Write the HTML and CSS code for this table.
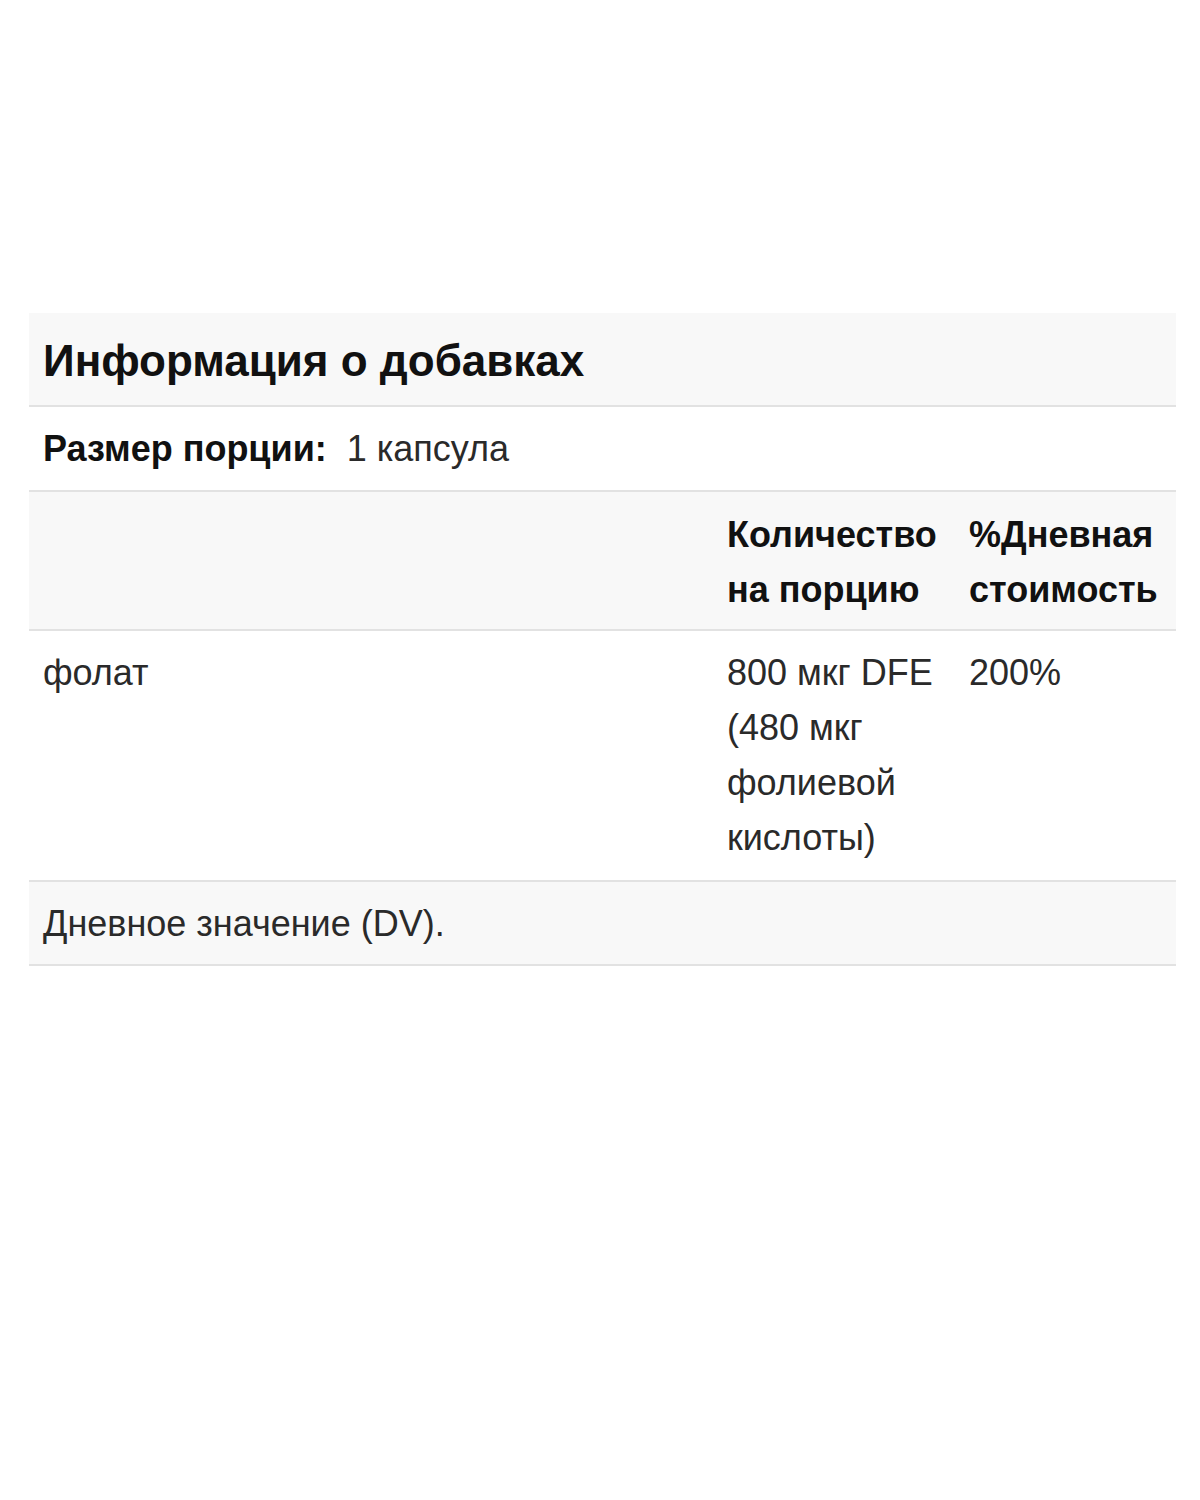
FILE: index.html
```html
<!DOCTYPE html>
<html lang="ru">
<head>
<meta charset="utf-8">
<link rel="stylesheet" href="styles.css">
</head>
<body>
<div class="page">
  <table class="facts">
    <colgroup>
      <col class="col1">
      <col class="col2">
      <col class="col3">
    </colgroup>
    <thead>
      <tr class="title-row"><th colspan="3">Информация о добавках</th></tr>
      <tr class="serving-row"><td colspan="3"><b>Размер порции:</b>&nbsp; 1 капсула</td></tr>
      <tr class="head-row">
        <th></th>
        <th>Количество на порцию</th>
        <th>%Дневная стоимость</th>
      </tr>
    </thead>
    <tbody>
      <tr class="item-row">
        <td>фолат</td>
        <td>800 мкг DFE (480 мкг фолиевой кислоты)</td>
        <td>200%</td>
      </tr>
      <tr class="foot-row"><td colspan="3">Дневное значение (DV).</td></tr>
    </tbody>
  </table>
</div>
</body>
</html>
```

FILE: styles.css
```css
html, body {
  margin: 0;
  padding: 0;
  background: #fff;
}
.page {
  padding: 313px 24px 0 29px;
  font-family: "Liberation Sans", Arial, sans-serif;
  color: #2a2a2a;
}
.facts {
  width: 1147px;
  border-collapse: collapse;
  table-layout: fixed;
  font-size: 36px;
  line-height: 55px;
}
.col1 { width: 684px; }
.col2 { width: 242px; }
.col3 { width: 221px; }
.facts th, .facts td {
  text-align: left;
  vertical-align: top;
  border-bottom: 2px solid #e2e2e2;
  padding: 14px 6px 14px 14px;
}
.title-row th {
  background: #f8f8f8;
  font-size: 44px;
  padding: 20px 14px 17px;
  color: #111;
}
.serving-row td {
  padding: 14px 14px;
}
.serving-row b { color: #111; }
.head-row th {
  background: #f8f8f8;
  color: #111;
  padding: 15px 4px 12px 14px;
}
.item-row td { padding: 14px 6px 15px 14px; }
.foot-row td { background: #f8f8f8; padding: 14px 14px 13px; }
```
